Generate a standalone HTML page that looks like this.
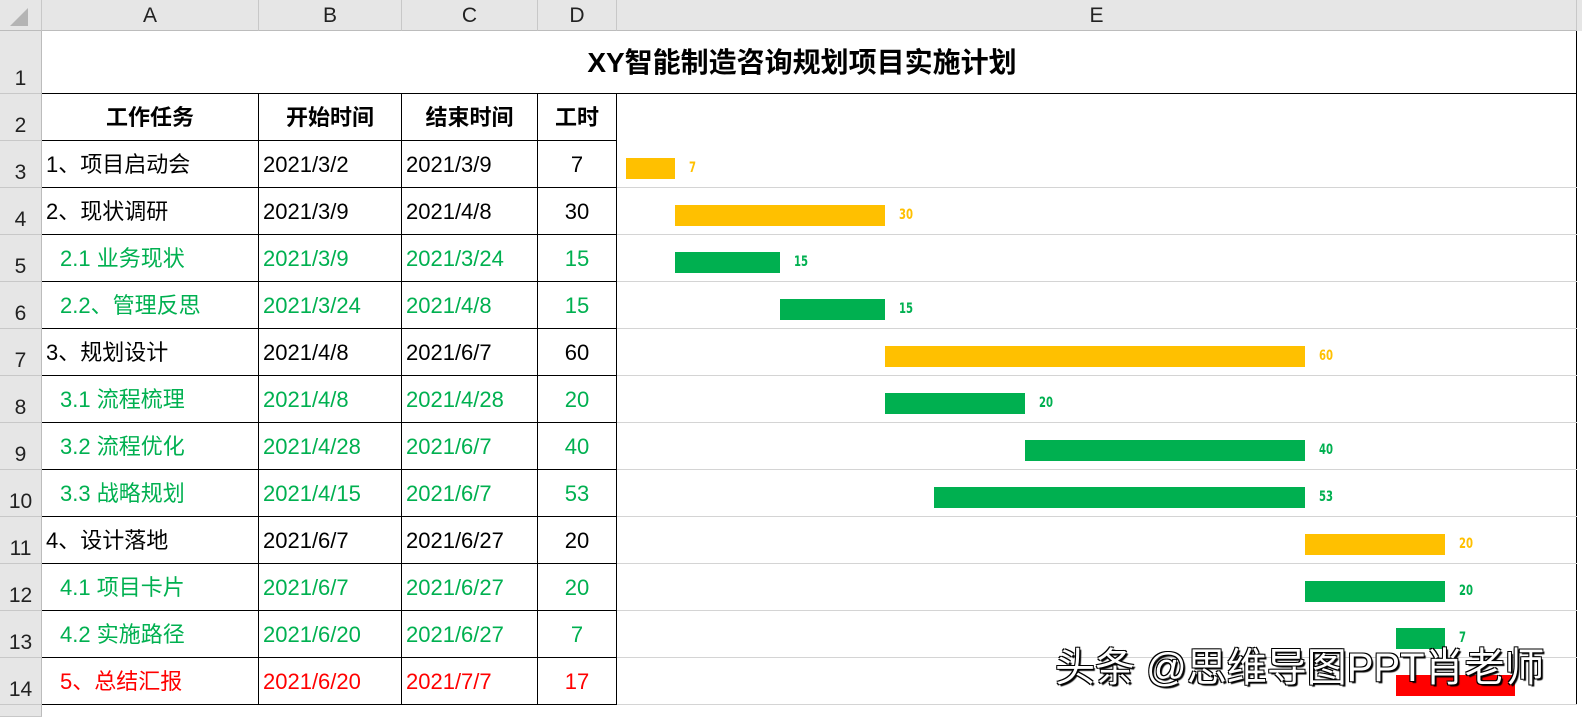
<!DOCTYPE html><html style="overflow:hidden"><head><meta charset="utf-8"><style>
html,body{overflow:hidden}
body{margin:0;width:1582px;height:717px;background:#fff;font-family:"Liberation Sans","Noto Sans CJK SC",sans-serif;position:relative}
div{position:absolute;box-sizing:border-box}
.ch{top:0;height:31px;background:#e6e6e6;border-right:1px solid #c8c8c8;border-bottom:1px solid #bcbcbc;text-align:center;font-size:21px;line-height:31px;color:#222}
.rh{left:0;width:42px;background:#e6e6e6;border-bottom:1px solid #c8c8c8;border-right:1px solid #bcbcbc;font-size:21px;color:#222;text-align:center;display:flex;align-items:flex-end;justify-content:center;padding-bottom:2px}
.c{font-size:22px;line-height:47px;height:47px;white-space:nowrap;border-right:1px solid #000;border-bottom:1px solid #000;overflow:hidden}
.g{color:#00b050}.r{color:#f00}
.bar{height:21px}
.lb{font-family:"DejaVu Sans Condensed","DejaVu Sans",sans-serif;font-weight:bold;font-size:14px;line-height:21px;transform:scaleX(.8);transform-origin:left}
.hl{left:617px;width:960px;height:1px;background:#d4d4d4}
</style></head><body>
<div class="ch" style="left:0;width:42px;"><svg width="42" height="31" style="position:absolute;left:0;top:0"><polygon points="28,8 28,26 10,26" fill="#b4b4b4"/></svg></div>
<div class="ch" style="left:42px;width:217px">A</div>
<div class="ch" style="left:259px;width:143px">B</div>
<div class="ch" style="left:402px;width:136px">C</div>
<div class="ch" style="left:538px;width:79px">D</div>
<div class="ch" style="left:617px;width:960px">E</div>
<div class="ch" style="left:1577px;width:5px;border:none"></div>
<div class="rh" style="top:31px;height:63px">1</div>
<div style="left:42px;top:31px;width:1535px;height:63px;border-bottom:1px solid #000;border-right:1px solid #000;text-align:center;font-weight:bold;font-size:28px;line-height:63px;padding-right:14px">XY智能制造咨询规划项目实施计划</div>
<div class="rh" style="top:94px;height:47px">2</div>
<div class="c" style="left:42px;top:94px;width:217px;text-align:center;font-weight:bold">工作任务</div>
<div class="c" style="left:259px;top:94px;width:143px;text-align:center;font-weight:bold">开始时间</div>
<div class="c" style="left:402px;top:94px;width:136px;text-align:center;font-weight:bold">结束时间</div>
<div class="c" style="left:538px;top:94px;width:79px;text-align:center;font-weight:bold">工时</div>
<div style="left:1576px;top:94px;width:1px;height:611px;background:#000"></div>
<div id="rows"></div>
<script>
var d=[["1、项目启动会","2021/3/2","2021/3/9","7",0,7,"y",""],
["2、现状调研","2021/3/9","2021/4/8","30",7,30,"y",""],
["2.1 业务现状","2021/3/9","2021/3/24","15",7,15,"g","g"],
["2.2、管理反思","2021/3/24","2021/4/8","15",22,15,"g","g"],
["3、规划设计","2021/4/8","2021/6/7","60",37,60,"y",""],
["3.1 流程梳理","2021/4/8","2021/4/28","20",37,20,"g","g"],
["3.2 流程优化","2021/4/28","2021/6/7","40",57,40,"g","g"],
["3.3 战略规划","2021/4/15","2021/6/7","53",44,53,"g","g"],
["4、设计落地","2021/6/7","2021/6/27","20",97,20,"y",""],
["4.1 项目卡片","2021/6/7","2021/6/27","20",97,20,"g","g"],
["4.2 实施路径","2021/6/20","2021/6/27","7",110,7,"g","g"],
["5、总结汇报","2021/6/20","2021/7/7","17",110,17,"r","r"]];
var h="",col={y:"#ffc000",g:"#00b050",r:"#ff0000"};
d.forEach(function(x,i){var t=141+47*i,ind=x[7]?"padding-left:18px":"padding-left:4px";
h+='<div class="rh" style="top:'+t+'px;height:47px">'+(i+3)+'</div>';
h+='<div class="c '+x[7]+'" style="left:42px;top:'+t+'px;width:217px;'+ind+'">'+x[0]+'</div>';
h+='<div class="c '+x[7]+'" style="left:259px;top:'+t+'px;width:143px;padding-left:4px">'+x[1]+'</div>';
h+='<div class="c '+x[7]+'" style="left:402px;top:'+t+'px;width:136px;padding-left:4px">'+x[2]+'</div>';
h+='<div class="c '+x[7]+'" style="left:538px;top:'+t+'px;width:79px;text-align:center">'+x[3]+'</div>';
h+='<div class="hl" style="top:'+(t+46)+'px"></div>';
var bx=626+7*x[4],bw=7*x[5];
h+='<div class="bar" style="left:'+bx+'px;top:'+(t+17)+'px;width:'+bw+'px;background:'+col[x[6]]+'"></div>';
if(i<11)h+='<div class="lb" style="left:'+(bx+bw+14)+'px;top:'+(t+17)+'px;color:'+col[x[6]]+'">'+x[3]+'</div>';
});
h+='<div class="rh" style="top:705px;height:12px"></div>';
document.getElementById("rows").outerHTML=h;
</script>
<div style="left:1055px;top:643px;font-size:40px;line-height:50px;color:#fff;text-shadow:2px 2px 1px #000,-1px -1px 0 #000,1px -1px 0 #000,-1px 1px 0 #000;white-space:nowrap;font-family:'Liberation Sans','WenQuanYi Zen Hei',sans-serif">头条 @思维导图PPT肖老师</div>
</body></html>
